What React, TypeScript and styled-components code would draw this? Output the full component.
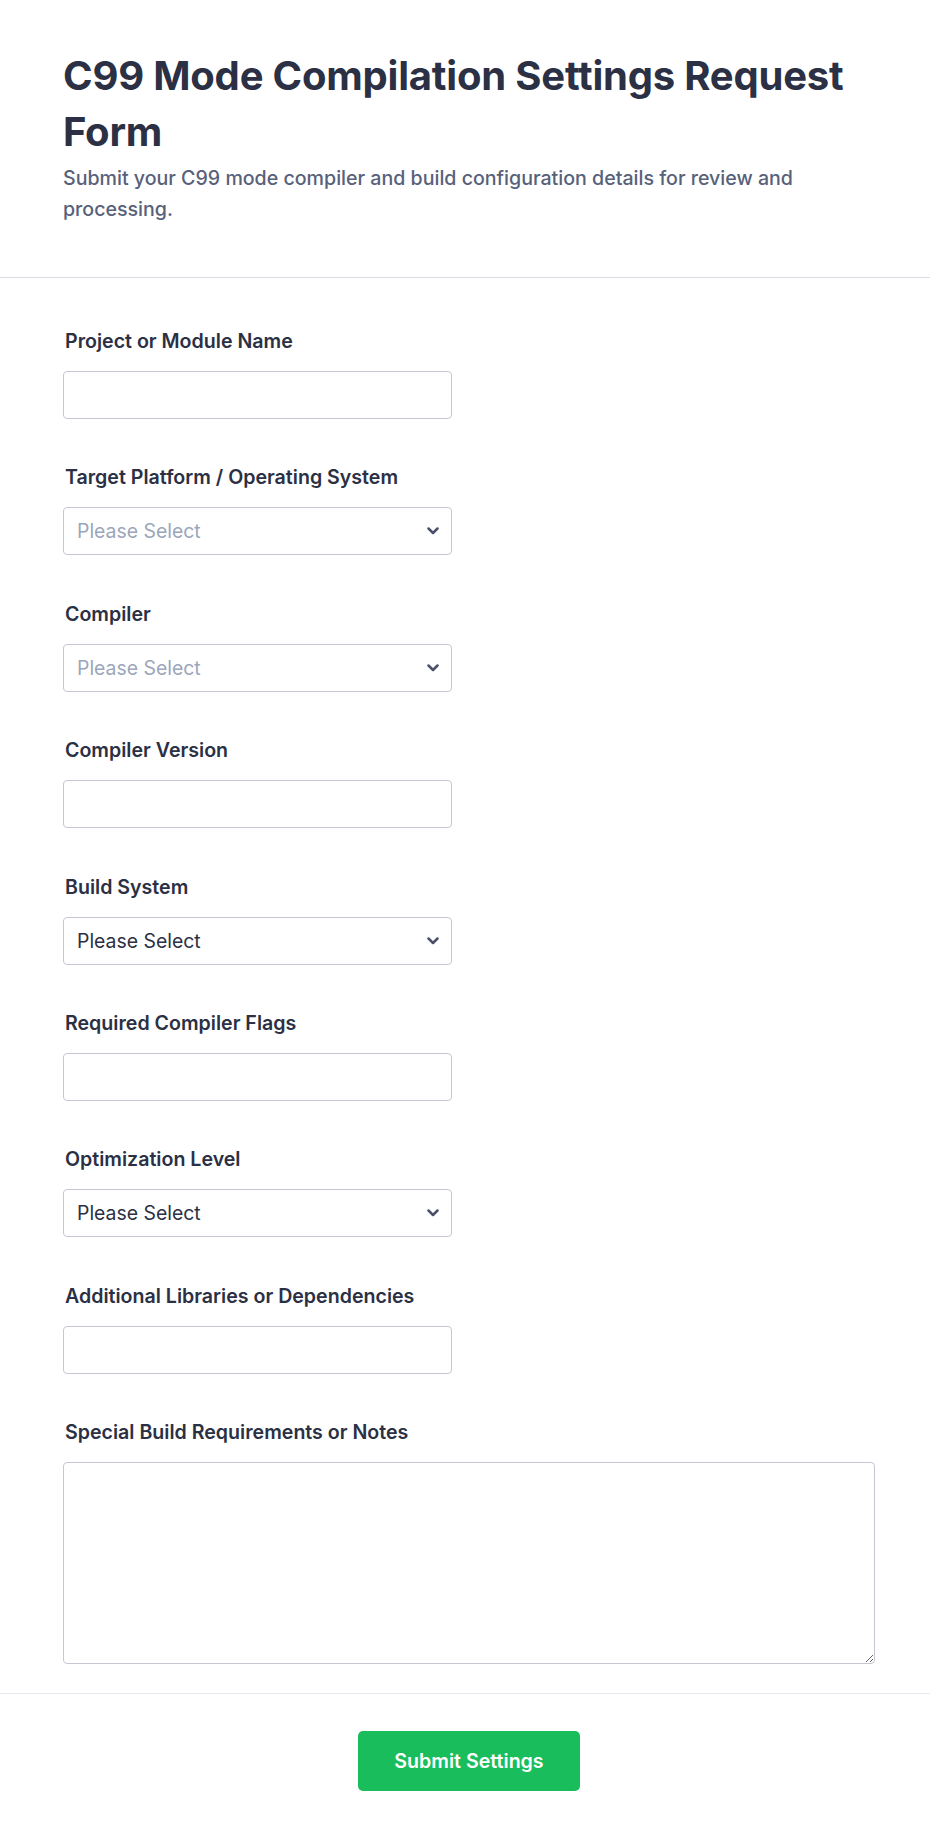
import React from 'react';
import styled, { createGlobalStyle } from 'styled-components';

const GlobalStyle = createGlobalStyle`
    html, body {
        margin: 0;
        padding: 0;
        background: #ffffff;
    }
    body {
        font-family: Inter, "Noto Sans", "Liberation Sans", sans-serif;
        color: #2b3044;
    }
    * {
        box-sizing: border-box;
    }
`;

const StyledPage = styled.form`
    width: 930px;
    min-height: 1840px;
    background: #ffffff;
`;

const StyledHeader = styled.header`
    padding: 48px 55px 52px 63px;
    border-bottom: 1px solid #d9dce4;
`;

const StyledTitle = styled.h1`
    margin: 0 0 3px;
    font-size: 40px;
    line-height: 56px;
    font-weight: 700;
    color: #2b3044;
    letter-spacing: -0.2px;
`;

const StyledSubtitle = styled.p`
    margin: 0;
    font-size: 19.6px;
    line-height: 31px;
    font-weight: 500;
    color: #57617a;
`;

const StyledBody = styled.div`
    display: flex;
    flex-direction: column;
    gap: 46.4px;
    padding: 51px 55px 29px 63px;
    border-bottom: 1px solid #e4e8ef;
`;

const StyledField = styled.div`
    display: flex;
    flex-direction: column;
    gap: 18px;
`;

const StyledLabel = styled.label`
    padding-left: 2px;
    font-size: 19.6px;
    line-height: 24px;
    font-weight: 600;
    color: #2b3044;
`;

const StyledInput = styled.input`
    width: 389px;
    height: 48px;
    padding: 0 14px;
    border: 1px solid #c5c8d4;
    border-radius: 4px;
    background: #ffffff;
    font-family: inherit;
    font-size: 19.6px;
    color: #2b3044;
    outline: none;
`;

const StyledSelectWrap = styled.div`
    position: relative;
    width: 389px;
    height: 48px;
`;

const StyledSelect = styled.select<{ $placeholder?: boolean }>`
    appearance: none;
    width: 100%;
    height: 100%;
    padding: 0 40px 0 13px;
    border: 1px solid #c5c8d4;
    border-radius: 4px;
    background: #ffffff;
    font-family: inherit;
    font-size: 19.4px;
    color: ${(p) => (p.$placeholder ? '#9ba6ba' : '#2b3044')};
    outline: none;
`;

const StyledChevron = styled.svg`
    position: absolute;
    top: 50%;
    right: 13px;
    width: 12px;
    height: 8px;
    transform: translateY(-50%);
    pointer-events: none;
`;

const StyledTextarea = styled.textarea`
    width: 812px;
    height: 202px;
    padding: 12px 14px;
    border: 1px solid #c5c8d4;
    border-radius: 4px;
    font-family: inherit;
    font-size: 19.6px;
    color: #2b3044;
    outline: none;
`;

const StyledFooter = styled.div`
    display: flex;
    justify-content: center;
    padding: 37px 55px 49px 63px;
`;

const StyledButton = styled.button`
    width: 222px;
    height: 60px;
    border: none;
    border-radius: 5px;
    background: #19bd5b;
    color: #ffffff;
    font-family: inherit;
    font-size: 19.6px;
    font-weight: 600;
    cursor: pointer;
`;

type SelectFieldProps = {
    label: string;
    placeholder?: boolean;
};

const SelectField = ({ label, placeholder }: SelectFieldProps) => (
    <StyledField>
        <StyledLabel>{label}</StyledLabel>
        <StyledSelectWrap>
            <StyledSelect $placeholder={placeholder} defaultValue="">
                <option value="">Please Select</option>
            </StyledSelect>
            <StyledChevron viewBox="0 0 12 8" fill="none">
                <path d="M1.5 1.5 L6 6 L10.5 1.5" stroke="#4a5169" strokeWidth="2.5" strokeLinecap="round" strokeLinejoin="round" />
            </StyledChevron>
        </StyledSelectWrap>
    </StyledField>
);

const TextField = ({ label }: { label: string }) => (
    <StyledField>
        <StyledLabel>{label}</StyledLabel>
        <StyledInput type="text" />
    </StyledField>
);

export default () => (
    <StyledPage onSubmit={(e) => e.preventDefault()}>
        <GlobalStyle />
        <StyledHeader>
            <StyledTitle>C99 Mode Compilation Settings Request Form</StyledTitle>
            <StyledSubtitle>
                Submit your C99 mode compiler and build configuration details for review and processing.
            </StyledSubtitle>
        </StyledHeader>

        <StyledBody>
            <TextField label="Project or Module Name" />
            <SelectField label="Target Platform / Operating System" placeholder />
            <SelectField label="Compiler" placeholder />
            <TextField label="Compiler Version" />
            <SelectField label="Build System" />
            <TextField label="Required Compiler Flags" />
            <SelectField label="Optimization Level" />
            <TextField label="Additional Libraries or Dependencies" />
            <StyledField>
                <StyledLabel>Special Build Requirements or Notes</StyledLabel>
                <StyledTextarea />
            </StyledField>
        </StyledBody>

        <StyledFooter>
            <StyledButton type="submit">Submit Settings</StyledButton>
        </StyledFooter>
    </StyledPage>
);
